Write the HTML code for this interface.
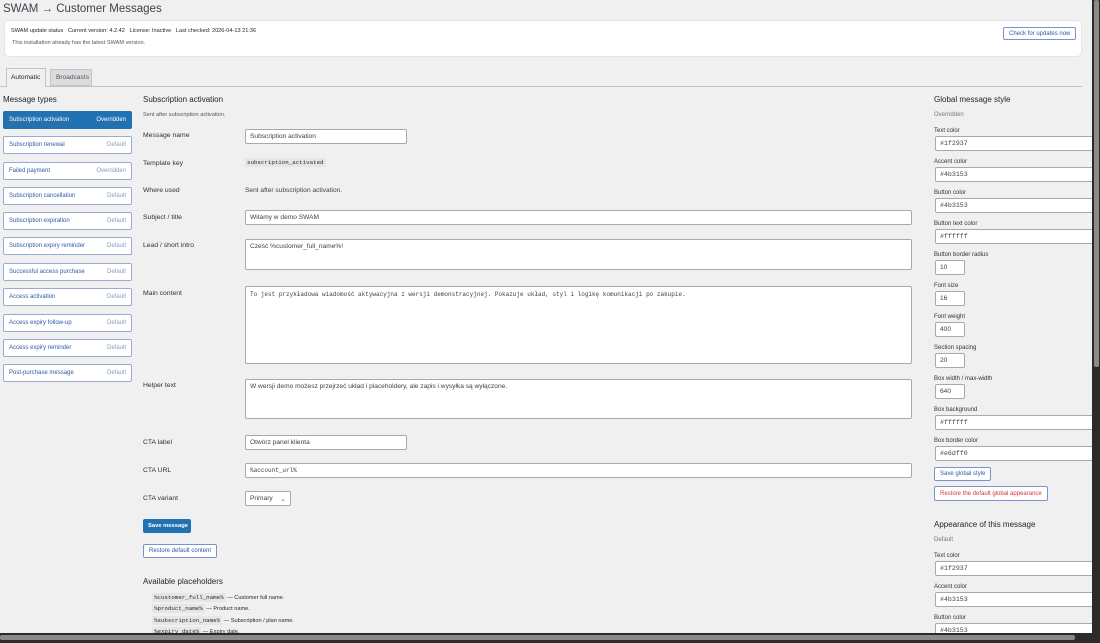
<!DOCTYPE html>
<html><head><meta charset="utf-8"><style>
*{box-sizing:border-box;margin:0;padding:0}
body{width:1100px;height:643px;overflow:hidden;background:#f0f0f1;font-family:"Liberation Sans",sans-serif;color:#1d2327;position:relative;font-size:6.5px}
.a{position:absolute;white-space:nowrap}
.inp{position:absolute;background:#fff;border:1px solid #a7aaad;border-radius:2px;height:15px;font-size:6.6px;padding:3px 4px;color:#3c434a}
.mono{font-family:"Liberation Mono",monospace}
.item{position:absolute;left:3px;width:129px;height:18px;border:1px solid #9aaad0;background:#fff;border-radius:2px;color:#2e5aa8;font-size:6px;padding:5px 5px}
.item span{float:right;color:#8a9bbd}
.item.act{background:#2271b1;border-color:#2271b1;color:#fff}
.item.act span{color:#fff}
.lbl{position:absolute;left:143px;font-size:6.8px;color:#2c3338}
.rl{position:absolute;left:934px;font-size:6px;color:#333}
.btn{position:absolute;background:#fff;border:1px solid #7b93c9;border-radius:2px;color:#2e5aa8;font-size:6px;padding:3px 5px;white-space:nowrap}
code{background:#e6e6e6;font-family:"Liberation Mono",monospace;font-size:5.8px;padding:1px 2px}
</style></head><body>
<div class="a" style="left:3px;top:3px;font-size:11.5px;color:#3c434a">SWAM → Customer Messages</div>
<div class="a" style="left:4px;top:20px;width:1078px;height:37px;background:#fff;border:1px solid #e4e4e4;border-radius:5px"></div>
<div class="a" style="left:11px;top:28px;font-size:5.6px">SWAM update status &nbsp; Current version: 4.2.42 &nbsp; License: Inactive &nbsp; Last checked: 2026-04-13 21:36</div>
<div class="a" style="left:12px;top:40px;font-size:5.6px;color:#555">This installation already has the latest SWAM version.</div>
<div class="btn" style="left:1003px;top:27px;height:13px">Check for updates now</div>
<div class="a" style="left:0;top:86px;width:1082px;height:1px;background:#c3c4c7"></div>
<div class="a" style="left:6px;top:68px;width:40px;height:19px;border:1px solid #c3c4c7;border-bottom:none;background:#f0f0f1;font-size:6.6px;padding:5px 4px">Automatic</div>
<div class="a" style="left:50px;top:69px;width:42px;height:17px;border:1px solid #c3c4c7;background:#dcdcde;font-size:6.6px;padding:4px 5px;color:#50575e">Broadcasts</div>
<div class="a" style="left:3px;top:95px;font-size:8px">Message types</div>
<div class="item act" style="top:111px">Subscription activation<span>Overridden</span></div>
<div class="item" style="top:136px">Subscription renewal<span>Default</span></div>
<div class="item" style="top:162px">Failed payment<span>Overridden</span></div>
<div class="item" style="top:187px">Subscription cancellation<span>Default</span></div>
<div class="item" style="top:212px">Subscription expiration<span>Default</span></div>
<div class="item" style="top:237px">Subscription expiry reminder<span>Default</span></div>
<div class="item" style="top:263px">Successful access purchase<span>Default</span></div>
<div class="item" style="top:288px">Access activation<span>Default</span></div>
<div class="item" style="top:314px">Access expiry follow-up<span>Default</span></div>
<div class="item" style="top:339px">Access expiry reminder<span>Default</span></div>
<div class="item" style="top:364px">Post-purchase message<span>Default</span></div>
<div class="a" style="left:143px;top:95px;font-size:8px">Subscription activation</div>
<div class="a" style="left:143px;top:112px;font-size:5.6px;color:#555">Sent after subscription activation.</div>
<div class="lbl" style="top:132px">Message name</div><div class="inp" style="left:245px;top:129px;width:162px">Subscription activation</div>
<div class="lbl" style="top:160px">Template key</div><div class="a" style="left:245px;top:159px"><code>subscription_activated</code></div>
<div class="lbl" style="top:187px">Where used</div><div class="a" style="left:245px;top:187px;font-size:6.6px;color:#3c434a">Sent after subscription activation.</div>
<div class="lbl" style="top:214px">Subject / title</div><div class="inp" style="left:245px;top:210px;width:667px">Witamy w demo SWAM</div>
<div class="lbl" style="top:242px">Lead / short intro</div><div class="inp" style="left:245px;top:239px;width:667px;height:31px">Cześć %customer_full_name%!</div>
<div class="lbl" style="top:290px">Main content</div><div class="inp mono" style="left:245px;top:286px;width:667px;height:78px;font-size:6px;padding-top:4px">To jest przykładowa wiadomość aktywacyjna z wersji demonstracyjnej. Pokazuje układ, styl i logikę komunikacji po zakupie.</div>
<div class="lbl" style="top:382px">Helper text</div><div class="inp" style="left:245px;top:379px;width:667px;height:40px">W wersji demo możesz przejrzeć układ i placeholdery, ale zapis i wysyłka są wyłączone.</div>
<div class="lbl" style="top:439px">CTA label</div><div class="inp" style="left:245px;top:435px;width:162px">Otwórz panel klienta</div>
<div class="lbl" style="top:467px">CTA URL</div><div class="inp mono" style="left:245px;top:463px;width:667px;font-size:6px">%account_url%</div>
<div class="lbl" style="top:495px">CTA variant</div><div class="inp" style="left:245px;top:491px;width:46px;height:15px">Primary <span style="float:right;color:#555">⌄</span></div>
<div class="a" style="left:143px;top:519px;width:48px;height:14px;background:#2271b1;border-radius:2px;color:#fff;font-size:5.8px;font-weight:bold;padding:4px 5px">Save message</div>
<div class="btn" style="left:143px;top:544px;height:14px">Restore default content</div>
<div class="a" style="left:143px;top:577px;font-size:8px">Available placeholders</div>
<div class="a" style="left:152px;top:594px;font-size:5.6px"><code>%customer_full_name%</code> — Customer full name.</div>
<div class="a" style="left:152px;top:605px;font-size:5.6px"><code>%product_name%</code> — Product name.</div>
<div class="a" style="left:152px;top:617px;font-size:5.6px"><code>%subscription_name%</code> — Subscription / plan name.</div>
<div class="a" style="left:152px;top:628px;font-size:5.6px"><code>%expiry_date%</code> — Expiry date.</div>
<div class="a" style="left:934px;top:95px;font-size:8px">Global message style</div>
<div class="rl" style="top:112px;color:#777">Overridden</div>
<div class="rl" style="top:128px">Text color</div><div class="inp mono" style="left:935px;top:136px;width:170px">#1f2937</div>
<div class="rl" style="top:159px">Accent color</div><div class="inp mono" style="left:935px;top:167px;width:170px">#4b3153</div>
<div class="rl" style="top:190px">Button color</div><div class="inp mono" style="left:935px;top:198px;width:170px">#4b3153</div>
<div class="rl" style="top:221px">Button text color</div><div class="inp mono" style="left:935px;top:229px;width:170px">#ffffff</div>
<div class="rl" style="top:252px">Button border radius</div><div class="inp" style="left:935px;top:260px;width:30px">10</div>
<div class="rl" style="top:283px">Font size</div><div class="inp" style="left:935px;top:291px;width:30px">16</div>
<div class="rl" style="top:314px">Font weight</div><div class="inp" style="left:935px;top:322px;width:30px">400</div>
<div class="rl" style="top:345px">Section spacing</div><div class="inp" style="left:935px;top:353px;width:30px">20</div>
<div class="rl" style="top:376px">Box width / max-width</div><div class="inp" style="left:935px;top:384px;width:30px">640</div>
<div class="rl" style="top:407px">Box background</div><div class="inp mono" style="left:935px;top:415px;width:170px">#ffffff</div>
<div class="rl" style="top:438px">Box border color</div><div class="inp mono" style="left:935px;top:446px;width:170px">#e6dff0</div>
<div class="btn" style="left:934px;top:467px;height:14px">Save global style</div>
<div class="btn" style="left:934px;top:486px;height:15px;color:#d63638;padding-top:4px">Restore the default global appearance</div>
<div class="a" style="left:934px;top:520px;font-size:8px">Appearance of this message</div>
<div class="rl" style="top:537px;color:#777">Default</div>
<div class="rl" style="top:553px">Text color</div><div class="inp mono" style="left:935px;top:561px;width:170px">#1f2937</div>
<div class="rl" style="top:584px">Accent color</div><div class="inp mono" style="left:935px;top:592px;width:170px">#4b3153</div>
<div class="rl" style="top:615px">Button color</div><div class="inp mono" style="left:935px;top:623px;width:170px">#4b3153</div>
<div class="a" style="left:1092px;top:0;width:8px;height:643px;background:#2b2b2b"></div>
<div class="a" style="left:1094px;top:0;width:5px;height:367px;background:#8a8a8a;border-radius:2px"></div>
<div class="a" style="left:0;top:633px;width:1100px;height:10px;background:#2b2b2b"></div>
<div class="a" style="left:0;top:635px;width:1075px;height:5px;background:#8a8a8a;border-radius:2px"></div>
</body></html>
